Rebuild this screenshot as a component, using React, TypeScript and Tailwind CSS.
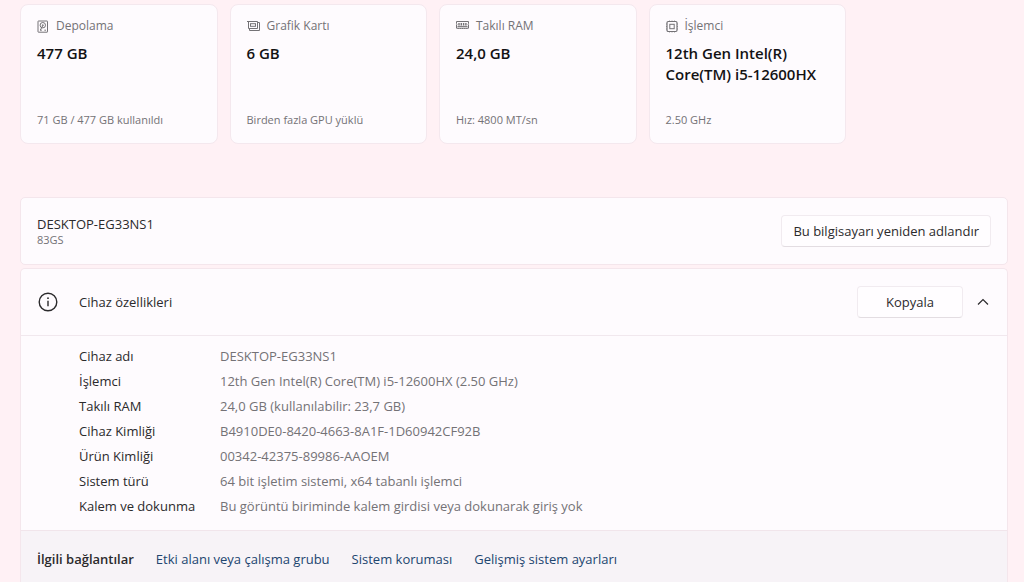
import React, { useState } from 'react';

const StorageIcon = () => (
  <svg width="12" height="13" viewBox="0 0 12 13" fill="none" stroke="currentColor">
    <rect x="1" y="1" width="9.5" height="11.2" rx="0.4" />
    <circle cx="5.8" cy="5.2" r="2.7" />
    <path d="M6 5.2 3.4 10M3 10.2h1.8M7.4 10.2h1.6" />
    <circle cx="5.8" cy="5.2" r="0.6" strokeWidth="0.8" />
  </svg>
);

const GpuIcon = () => (
  <svg width="13" height="12" viewBox="0 0 13 12" fill="none" stroke="currentColor">
    <path d="M0 1.5h10.5v7h-9v-7" />
    <rect x="3.5" y="3.7" width="5" height="2.6" />
    <path d="M10.5 2.5h2v8h-10v-2" />
  </svg>
);

const RamIcon = () => (
  <svg width="13" height="12" viewBox="0 0 13 12" fill="none" stroke="currentColor">
    <path d="M.5 1.5h12v2l-.7.6.7.7v3.4H.5V4.8l.7-.7-.7-.6z" />
    <path d="M3 3v2.4M5.3 3v2.4M7.6 3v2.4M9.9 3v2.4" strokeWidth="1.4" />
    <path d="M1.5 6.4h10" />
    <path d="M2.2 8v1M4.3 8v1M6.5 8v1M8.7 8v1M10.8 8v1" strokeWidth="1.1" />
  </svg>
);

const CpuIcon = () => (
  <svg width="12" height="13" viewBox="0 0 12 13" fill="none" stroke="currentColor">
    <rect x="1" y="1.5" width="10" height="10" rx="1.2" strokeWidth="1.2" />
    <rect x="3.8" y="4.3" width="4.4" height="4.4" />
    <path
      d="M3.5.5v1M6 .5v1M8.5.5v1M3.5 11.5v1M6 11.5v1M8.5 11.5v1M0 4h1M0 6.5h1M0 9h1M11 4h1M11 6.5h1M11 9h1"
      strokeWidth="0.7"
    />
  </svg>
);

const cards = [
  { icon: <StorageIcon />, label: 'Depolama', value: '477 GB', note: '71 GB / 477 GB kullanıldı' },
  { icon: <GpuIcon />, label: 'Grafik Kartı', value: '6 GB', note: 'Birden fazla GPU yüklü' },
  { icon: <RamIcon />, label: 'Takılı RAM', value: '24,0 GB', note: 'Hız: 4800 MT/sn' },
  { icon: <CpuIcon />, label: 'İşlemci', value: '12th Gen Intel(R) Core(TM) i5-12600HX', note: '2.50 GHz' },
];

const specs = [
  ['Cihaz adı', 'DESKTOP-EG33NS1'],
  ['İşlemci', '12th Gen Intel(R) Core(TM) i5-12600HX (2.50 GHz)'],
  ['Takılı RAM', '24,0 GB (kullanılabilir: 23,7 GB)'],
  ['Cihaz Kimliği', 'B4910DE0-8420-4663-8A1F-1D60942CF92B'],
  ['Ürün Kimliği', '00342-42375-89986-AAOEM'],
  ['Sistem türü', '64 bit işletim sistemi, x64 tabanlı işlemci'],
  ['Kalem ve dokunma', 'Bu görüntü biriminde kalem girdisi veya dokunarak giriş yok'],
];

const links = ['Etki alanı veya çalışma grubu', 'Sistem koruması', 'Gelişmiş sistem ayarları'];

const App = () => {
  const [open, setOpen] = useState(true);

  return (
    <main className="min-h-screen bg-[#fff1f5] pt-1 pr-4 pl-5 font-['Open_Sans','Noto_Sans',sans-serif] text-[13px] leading-5 text-[#2b2a2c]">
      <section className="grid max-w-[826px] grid-cols-4 gap-3">
        {cards.map((card) => (
          <article
            key={card.label}
            className="flex h-[140px] flex-col rounded-lg border border-[#f4e8ee] bg-[#fefbfe] px-4 pt-[11px] pb-[13px]"
          >
            <div className="flex items-center gap-[7px] text-xs leading-5 text-[#747276]">
              {card.icon}
              <span>{card.label}</span>
            </div>
            <h2 className="mt-[7px] text-[15px] leading-[21px] font-semibold text-[#131214]">{card.value}</h2>
            <p className="mt-auto text-[11px] leading-5 text-[#747276]">{card.note}</p>
          </article>
        ))}
      </section>

      <section className="mt-[53px] flex items-center justify-between rounded-[5px] border border-[#f4e6ec] bg-[#fefbfe] px-4 py-[17px]">
        <div>
          <h1 className="leading-[18px]">DESKTOP-EG33NS1</h1>
          <p className="text-[11px] leading-[14px] text-[#747276]">83GS</p>
        </div>
        <button
          type="button"
          className="h-8 rounded border border-[#f1ebf0] border-b-[#e3dde2] bg-[#fffdff] px-[11px]"
        >
          Bu bilgisayarı yeniden adlandır
        </button>
      </section>

      <section className="mt-[3px] rounded-t-[5px] border border-b-0 border-[#f4e6ec] bg-[#fefbfe]">
        <header className="flex h-[67px] items-center border-b border-[#f1e8ee] px-4">
          <svg width="22" height="22" viewBox="0 0 22 22" fill="none" stroke="currentColor" strokeWidth="1.4">
            <circle cx="11" cy="11" r="8.8" />
            <path d="M11 9.8v5.4" />
            <circle cx="11" cy="7.2" r="0.9" fill="currentColor" stroke="none" />
          </svg>
          <h2 className="ml-5">Cihaz özellikleri</h2>
          <button
            type="button"
            className="ml-auto h-8 rounded border border-[#f1ebf0] border-b-[#e3dde2] bg-[#fffdff] px-7"
          >
            Kopyala
          </button>
          <button
            type="button"
            aria-label="Cihaz özellikleri"
            aria-expanded={open}
            onClick={() => setOpen(!open)}
            className="ml-3 flex h-8 w-4 items-center justify-center"
          >
            <svg width="12" height="8" viewBox="0 0 12 8" fill="none" stroke="currentColor" strokeWidth="1.2">
              <path d={open ? 'M1 6.5 6 1.5l5 5' : 'M1 1.5l5 5 5-5'} />
            </svg>
          </button>
        </header>

        {open && (
          <table className="mt-[7px] mb-3 ml-[58px] text-left">
            <tbody>
              {specs.map(([name, value]) => (
                <tr key={name} className="h-[25px]">
                  <th scope="row" className="w-[141px] font-normal">
                    {name}
                  </th>
                  <td className="text-[#747276]">{value}</td>
                </tr>
              ))}
            </tbody>
          </table>
        )}

        <footer className="flex h-[52px] items-center gap-[22px] border-t border-[#f1e5eb] bg-[#f7f3f7] pt-1 pr-4 pl-4">
          <h3 className="font-semibold">İlgili bağlantılar</h3>
          {links.map((link) => (
            <a key={link} href="#" className="text-[#21456f]">
              {link}
            </a>
          ))}
        </footer>
      </section>
    </main>
  );
};

export default App;
